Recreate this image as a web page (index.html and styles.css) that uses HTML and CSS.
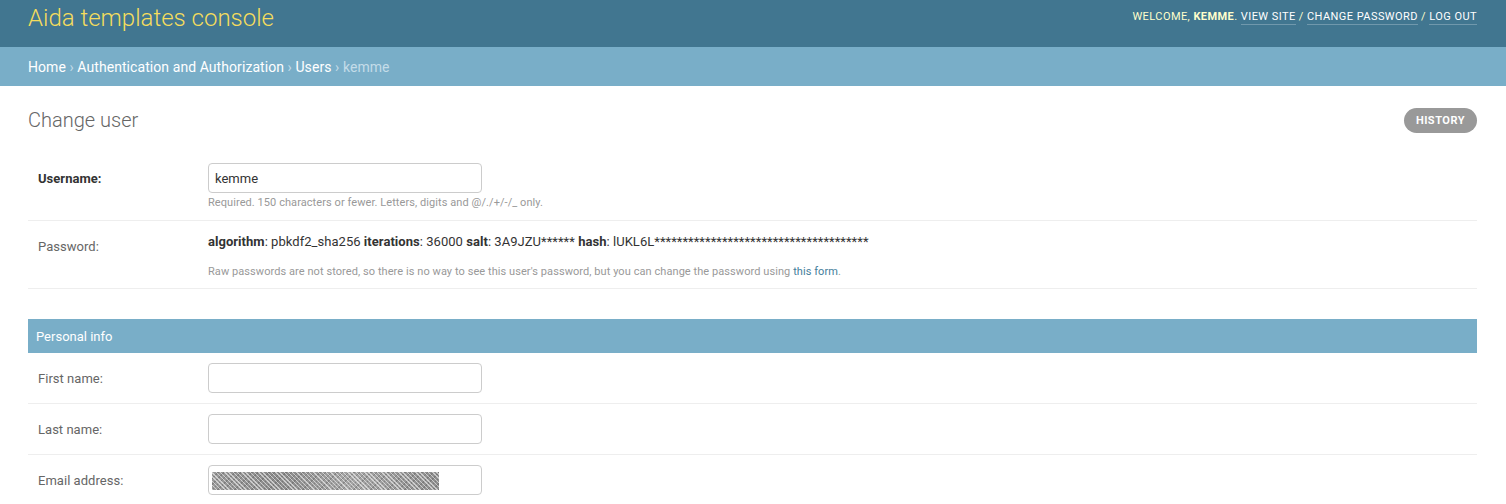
FILE: index.html
```html
<!DOCTYPE html>
<html lang="en">
<head>
<meta charset="utf-8">
<title>Change user | Aida templates console</title>
<link rel="stylesheet" href="styles.css">
</head>
<body>
<header class="header">
  <h1 class="branding">Aida templates console</h1>
  <div class="user-tools">
    Welcome, <strong>kemme</strong>.
    <a href="#">View site</a> /
    <a href="#">Change password</a> /
    <a href="#">Log out</a>
  </div>
</header>
<nav class="breadcrumbs">
  <a href="#">Home</a> › <a href="#">Authentication and Authorization</a> › <a href="#">Users</a> › <span class="current">kemme</span>
</nav>
<main class="content">
  <div class="title-row">
    <h1 class="page-title">Change user</h1>
    <a class="history" href="#">History</a>
  </div>

  <fieldset class="module first">
    <div class="form-row">
      <label class="label required">Username:</label>
      <div class="field">
        <div class="input"><span class="value">kemme</span></div>
        <div class="help">Required. 150 characters or fewer. Letters, digits and @/./+/-/_ only.</div>
      </div>
    </div>
    <div class="form-row">
      <label class="label">Password:</label>
      <div class="field">
        <div class="readonly"><strong>algorithm</strong>: pbkdf2_sha256 <strong>iterations</strong>: 36000 <strong>salt</strong>: 3A9JZU****** <strong>hash</strong>: lUKL6L**************************************</div>
        <div class="help help-pw">Raw passwords are not stored, so there is no way to see this user's password, but you can change the password using <a href="#">this form</a>.</div>
      </div>
    </div>
  </fieldset>

  <fieldset class="module">
    <h2 class="module-title">Personal info</h2>
    <div class="form-row">
      <label class="label">First name:</label>
      <div class="field"><div class="input"></div></div>
    </div>
    <div class="form-row">
      <label class="label">Last name:</label>
      <div class="field"><div class="input"></div></div>
    </div>
    <div class="form-row">
      <label class="label">Email address:</label>
      <div class="field"><div class="input"><span class="redacted"></span></div></div>
    </div>
  </fieldset>
</main>
</body>
</html>
```

FILE: styles.css
```css
* { box-sizing: border-box; }
html, body { margin: 0; padding: 0; }
body {
  font-family: Roboto, "Liberation Sans", sans-serif;
  font-size: 14px;
  color: #333;
  background: #fff;
  overflow: hidden;
}
a { text-decoration: none; }

.header {
  height: 47px;
  background: #417690;
  display: flex;
  justify-content: space-between;
  align-items: flex-start;
  padding: 0 29px 0 28px;
}
.branding {
  margin: 0;
  font-size: 24px;
  font-weight: 300;
  line-height: 36px;
  color: #f5dd5d;
}
.user-tools {
  font-size: 11px;
  letter-spacing: 0.44px;
  text-transform: uppercase;
  color: #ffc;
  line-height: 34px;
}
.user-tools strong { font-weight: 700; }
.user-tools a {
  color: #fff;
  border-bottom: 1px solid rgba(255,255,255,0.25);
  padding-bottom: 1px;
}

.breadcrumbs {
  height: 39px;
  line-height: 41px;
  background: #79aec8;
  padding: 0 28px;
  font-size: 14px;
  letter-spacing: 0.07px;
  color: #c4dce8;
}
.breadcrumbs a { color: #fff; }
.breadcrumbs .current { color: #c4dce8; }

.content { padding: 0 29px 0 28px; }
.title-row {
  height: 67px;
  display: flex;
  justify-content: space-between;
  align-items: center;
}
.page-title {
  margin: 0;
  font-size: 20px;
  font-weight: 300;
  color: #666;
  padding-top: 1px;
}
.history {
  display: inline-block;
  height: 25px;
  line-height: 25px;
  padding: 0 12px;
  border-radius: 15px;
  background: #999;
  color: #fff;
  font-size: 11px;
  font-weight: 700;
  letter-spacing: 0.5px;
  text-transform: uppercase;
  margin-top: 1px;
}

.module {
  margin: 0 0 30px 0;
  padding: 0;
  border: 0;
  min-width: 0;
}
.module-title {
  margin: 0;
  height: 34px;
  line-height: 32px;
  padding: 2px 8px 0;
  background: #79aec8;
  color: #fff;
  font-size: 13px;
  font-weight: 400;
}
.form-row {
  display: flex;
  padding: 10px;
  border-bottom: 1px solid #eee;
  font-size: 13px;
}
.label {
  width: 170px;
  flex: none;
  padding-top: 6px;
  line-height: 20px;
  color: #666;
  letter-spacing: 0.03px;
}
.label.required { color: #333; font-weight: 700; }
.field { flex: 1; }
.input {
  width: 274px;
  height: 30px;
  border: 1px solid #ccc;
  border-radius: 4px;
  padding: 0 6px;
  display: flex;
  align-items: center;
  font-size: 13px;
  color: #333;
}
.value { padding-top: 1px; }
.help {
  margin-top: 3px;
  font-size: 11px;
  line-height: 14px;
  color: #999;
  letter-spacing: 0.07px;
}
.help a { color: #447e9b; }
.help-pw { margin-top: 14px; line-height: 12px; }
.readonly {
  padding-top: 1px;
  line-height: 20px;
  font-size: 13px;
  color: #333;
  letter-spacing: 0.04px;
}
.readonly strong { font-weight: 700; }
.redacted {
  display: block;
  width: 227px;
  height: 18px;
  margin-left: -3px;
  margin-top: 1px;
  background:
    repeating-linear-gradient(45deg, rgba(255,255,255,0.55) 0 1px, transparent 1px 3px),
    repeating-linear-gradient(-45deg, rgba(80,80,80,0.35) 0 1px, transparent 1px 4px),
    linear-gradient(90deg, #9a9a9a, #8a8a8a 30%, #a5a5a5 60%, #8e8e8e);
}
```
